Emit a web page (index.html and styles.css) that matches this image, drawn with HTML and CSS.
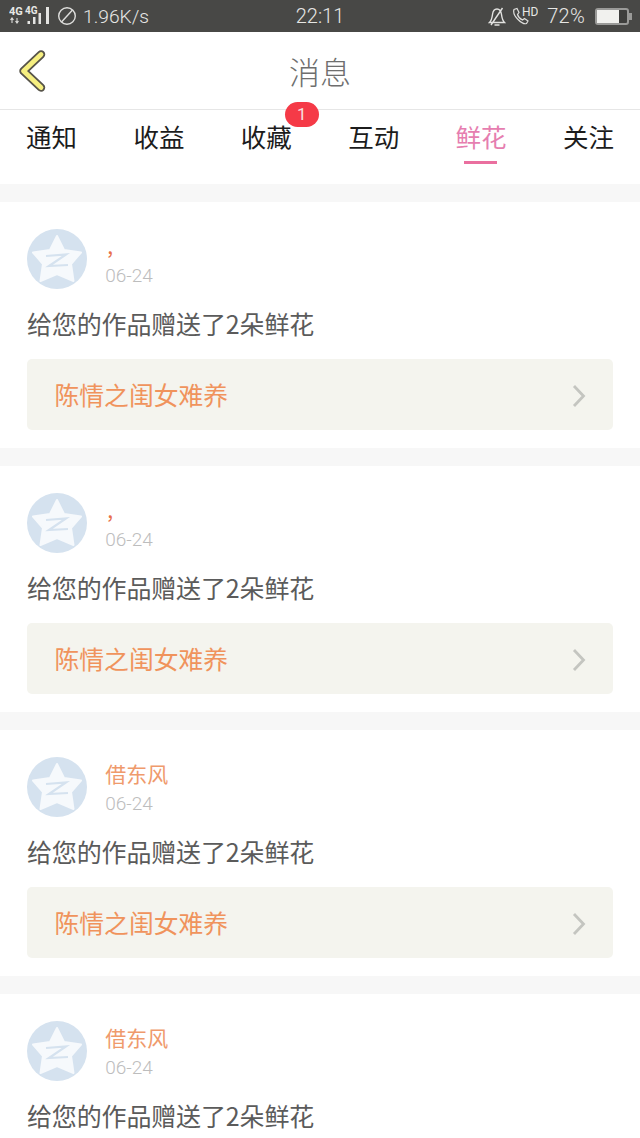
FILE: index.html
```html
<!DOCTYPE html>
<html lang="zh">
<head>
<meta charset="utf-8">
<title>消息</title>
<link rel="stylesheet" href="styles.css">
</head>
<body>
<svg class="defs" width="0" height="0" aria-hidden="true">
  <defs>
    <symbol id="avatar" viewBox="0 0 60 60">
      <circle cx="30" cy="30" r="30" fill="#d5e2ef"/>
      <path d="M30 7 L37 21 L54 23.500 L44 35 L46.500 52 L30 45 L13.500 52 L16 35 L6 23.500 L23 21 Z" fill="#f6f9fc" stroke="#f6f9fc" stroke-width="2" stroke-linejoin="round"/>
      <path d="M19 27 L39 25.500 L22 37 L41 36" fill="none" stroke="#d5e2ef" stroke-width="2.200"/>
    </symbol>
    <symbol id="chev" viewBox="0 0 14 24">
      <path d="M2 2 L11.500 12 L2 22" fill="none" stroke="#c4c5c0" stroke-width="2.800"/>
    </symbol>
  </defs>
</svg>
<div class="status">
  <div class="status-left">
    <svg class="sig" width="41" height="24" viewBox="0 0 41 24">
      <text x="0" y="12" class="sig-text">4G</text>
      <text x="16" y="11" class="sig-text sig-small">4G</text>
      <path d="M3 20v-5M1.500 17L3 15L4.500 17M8 15v5M6.500 18L8 20L9.500 18" stroke="#dcdcda" stroke-width="1.100" fill="none"/>
      <path d="M18.500 18h2.500v3h-2.500zM24 14h2.500v7H24zM29.500 10h2.500v11h-2.500zM37 4h3v17h-3z" fill="#e4e4e2"/>
    </svg>
    <svg width="20" height="20" viewBox="0 0 20 20"><circle cx="10" cy="10" r="8.300" fill="none" stroke="#dededc" stroke-width="1.400"/><path d="M4.500 16L15.500 4" stroke="#dededc" stroke-width="1.400"/></svg>
    <span class="speed">1.96K/s</span>
  </div>
  <span class="time">22:11</span>
  <div class="status-right">
    <svg width="18" height="20" viewBox="0 0 18 20"><path d="M1.500 16.500c2-2 2.500-4 3-8 .4-3.500 2-5.500 4.500-5.500s4 2 4.500 5.500c.5 4 1 6 3 8zM6.500 19h5M14.500 2L3 19" fill="none" stroke="#e2e2e0" stroke-width="1.400"/></svg>
    <svg class="hd" width="26" height="20" viewBox="0 0 26 20"><path d="M2 3.500c-1 3 1 7 4 10s6 5 8.500 4l1.500-2.500-3.500-2.500-2 1.500c-2-1-4.500-3.500-5-5.500l1.500-2L5 2.500z" fill="none" stroke="#dededc" stroke-width="1.200"/><text x="10" y="10" class="hd-text">HD</text></svg>
    <span class="pct">72%</span>
    <div class="battery"><div class="battery-fill"></div></div>
  </div>
</div>
<header class="nav">
  <svg class="back" width="30" height="44" viewBox="0 0 30 44"><path d="M24 5.500 L6.500 22 L24 38.500" fill="none" stroke="#57544a" stroke-width="8.500" stroke-linecap="round" stroke-linejoin="round"/><path d="M24 5.500 L6.500 22 L24 38.500" fill="none" stroke="#f6ef80" stroke-width="4.800" stroke-linecap="round" stroke-linejoin="round"/></svg>
  <h1 class="title">消息</h1>
</header>
<nav class="tabs">
  <span class="tab">通知</span>
  <span class="tab">收益</span>
  <span class="tab">收藏<i class="badge">1</i></span>
  <span class="tab">互动</span>
  <span class="tab tab-on">鲜花</span>
  <span class="tab">关注</span>
</nav>
<main class="list">
  <article class="card">
    <div class="who">
      <svg class="avatar"><use href="#avatar"/></svg>
      <div class="meta"><div class="name name-mark">,</div><div class="date">06-24</div></div>
    </div>
    <p class="msg">给您的作品赠送了2朵鲜花</p>
    <div class="link"><span class="link-text">陈情之闺女难养</span><svg class="chev"><use href="#chev"/></svg></div>
  </article>
  <article class="card">
    <div class="who">
      <svg class="avatar"><use href="#avatar"/></svg>
      <div class="meta"><div class="name name-mark">,</div><div class="date">06-24</div></div>
    </div>
    <p class="msg">给您的作品赠送了2朵鲜花</p>
    <div class="link"><span class="link-text">陈情之闺女难养</span><svg class="chev"><use href="#chev"/></svg></div>
  </article>
  <article class="card">
    <div class="who">
      <svg class="avatar"><use href="#avatar"/></svg>
      <div class="meta"><div class="name">借东风</div><div class="date">06-24</div></div>
    </div>
    <p class="msg">给您的作品赠送了2朵鲜花</p>
    <div class="link"><span class="link-text">陈情之闺女难养</span><svg class="chev"><use href="#chev"/></svg></div>
  </article>
  <article class="card card-last">
    <div class="who">
      <svg class="avatar"><use href="#avatar"/></svg>
      <div class="meta"><div class="name">借东风</div><div class="date">06-24</div></div>
    </div>
    <p class="msg">给您的作品赠送了2朵鲜花</p>
  </article>
</main>
</body>
</html>
```
FILE: styles.css
```css
* { box-sizing: border-box; }
html, body { margin: 0; padding: 0; }
body {
  width: 640px;
  height: 1138px;
  overflow: hidden;
  background: #fff;
  font-family: "Noto Sans CJK SC", "Noto Sans", sans-serif;
}
.defs { display: block; height: 0; }
.status {
  height: 32px;
  background: #484846;
  color: #e6e6e4;
  display: grid;
  grid-template-columns: 1fr auto 1fr;
  align-items: center;
  padding: 0 8px 0 9px;
  font-family: Roboto, sans-serif;
  font-size: 20px;
}
.status-left, .status-right { display: flex; align-items: center; }
.status-left { gap: 7px; }
.sig { flex: none; margin-top: -2px; }
.sig-text { font: 700 11px Roboto, sans-serif; fill: #e8e8e6; }
.sig-small { font-size: 10px; }
.speed { margin-left: -1px; font-size: 19.200px; font-weight: 300; }
.time { font-size: 20px; font-weight: 300; margin-left: -1px; }
.status-right { justify-content: flex-end; }
.hd { margin-left: 6px; }
.hd-text { font: 12px Roboto, sans-serif; fill: #e6e6e4; }
.pct { margin-left: 9px; font-size: 20px; letter-spacing: .3px; font-weight: 300; }
.battery {
  position: relative;
  margin-left: 10px;
  margin-right: 3px;
  width: 34px;
  height: 17px;
  border: 2px solid #9a9a98;
  border-radius: 3px;
  background: #3e3e3c;
}
.battery::after {
  content: "";
  position: absolute;
  right: -5px;
  top: 3px;
  width: 3px;
  height: 7px;
  background: #9a9a98;
}
.battery-fill { width: 72%; height: 100%; background: #f1f1ee; }
.nav {
  height: 78px;
  position: relative;
  display: flex;
  align-items: center;
  justify-content: center;
  border-bottom: 1px solid #e6e6e6;
}
.back { position: absolute; left: 17px; top: 17px; }
.title {
  margin: 0;
  font-size: 31px;
  font-weight: 300;
  color: #6e6e6e;
  line-height: 1;
}
.tabs {
  height: 74px;
  display: flex;
  justify-content: space-between;
  padding: 0 26px;
}
.tab {
  position: relative;
  height: 54px;
  padding-top: 8px;
  font-size: 25.500px;
  line-height: 36px;
  color: #1c1c1c;
  font-weight: 400;
}
.tab-on { color: #e67eb0; }
.tab-on::after {
  content: "";
  position: absolute;
  left: 8px;
  right: 10px;
  bottom: 0;
  height: 3px;
  background: #ea6f9f;
}
.badge {
  position: absolute;
  left: 44px;
  top: -8px;
  width: 34px;
  height: 25px;
  border-radius: 12.500px;
  background: #f53a47;
  color: #f6e0e0;
  font: normal 17px/25px Roboto, sans-serif;
  text-align: center;
}
.list {
  background: #f7f7f7;
  padding-top: 18px;
  display: flex;
  flex-direction: column;
  gap: 18px;
}
.card {
  height: 246px;
  flex: none;
  background: #fff;
  padding: 27px 27px 0;
}
.card-last { height: 145px; }
.who { display: flex; height: 60px; }
.avatar { width: 60px; height: 60px; flex: none; margin-left: -.300px; }
.meta { margin-left: 18.500px; padding-top: 1px; }
.name {
  height: 32px;
  font-size: 21px;
  line-height: 31px;
  color: #ef9a6c;
}
.name-mark { color: #e8704a; padding-left: 2px; }
.date {
  font-family: Roboto, sans-serif;
  font-size: 19px;
  font-weight: 300;
  line-height: 28px;
  color: #bdbdbd;
}
.msg {
  margin: 16px 0 0;
  font-size: 25px;
  line-height: 36px;
  letter-spacing: -.15px;
  color: #5b5b5b;
}
.link {
  margin-top: 18px;
  width: 586px;
  height: 71px;
  background: #f4f4ee;
  border-radius: 5px;
  padding: 0 27px 0 27.500px;
  display: flex;
  align-items: center;
  justify-content: space-between;
  font-size: 24.800px;
  color: #f0935c;
}
.link-text { margin-bottom: 2px; }
.chev { width: 14px; height: 24px; flex: none; margin-top: 2px; }
```
